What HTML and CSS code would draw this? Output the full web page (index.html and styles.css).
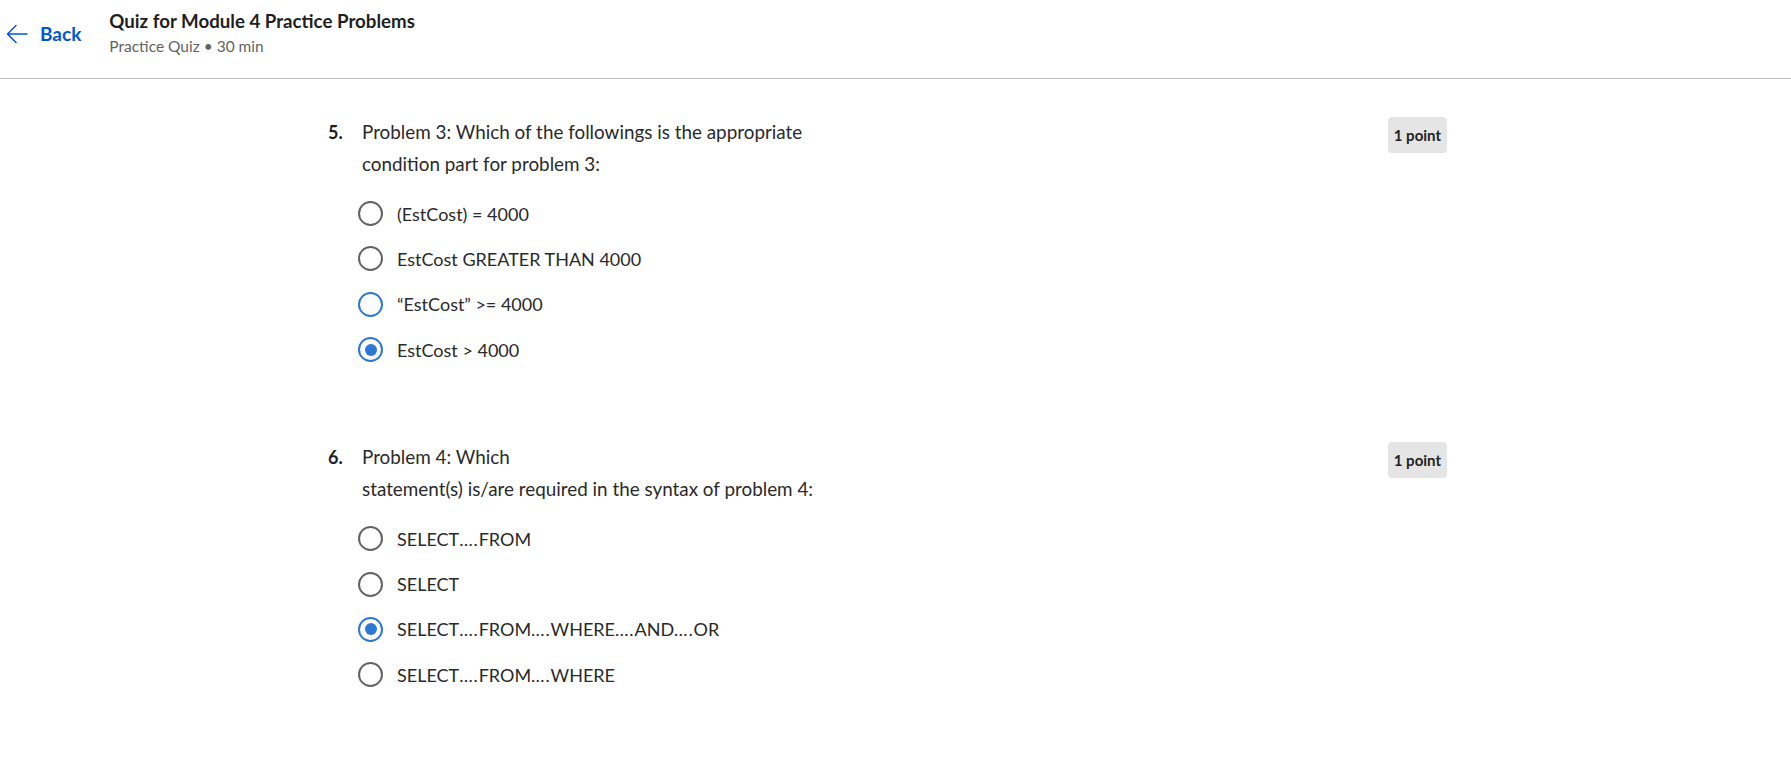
FILE: index.html
```html
<!DOCTYPE html>
<html lang="en">
<head>
<meta charset="utf-8">
<title>Quiz for Module 4 Practice Problems</title>
<link rel="stylesheet" href="styles.css">
</head>
<body>
<header class="topbar">
  <a class="back" href="#">
    <svg class="back-icon" width="22" height="20" viewBox="0 0 22 20" aria-hidden="true">
      <path d="M21 10 H2 M10 1.5 L1.5 10 L10 18.5" fill="none" stroke="#0056d2" stroke-width="1.5" stroke-linecap="round" stroke-linejoin="round"/>
    </svg>
    <span class="back-label">Back</span>
  </a>
  <div class="title-block">
    <div class="quiz-title">Quiz for Module 4 Practice Problems</div>
    <div class="quiz-meta">Practice Quiz • 30 min</div>
  </div>
</header>

<main class="content">
  <section class="question">
    <div class="qnum">5.</div>
    <div class="qbody">
      <div class="qtext">Problem 3: Which of the followings is the appropriate<br>condition part for problem 3:</div>
      <div class="options">
        <label class="option"><span class="radio"></span><span class="opt-text">(EstCost) = 4000</span></label>
        <label class="option"><span class="radio"></span><span class="opt-text">EstCost GREATER THAN 4000</span></label>
        <label class="option"><span class="radio focus"></span><span class="opt-text">“EstCost” &gt;= 4000</span></label>
        <label class="option"><span class="radio checked"></span><span class="opt-text">EstCost &gt; 4000</span></label>
      </div>
    </div>
    <div class="badge">1 point</div>
  </section>

  <section class="question q6">
    <div class="qnum">6.</div>
    <div class="qbody">
      <div class="qtext">Problem 4: Which<br>statement(s) is/are required in the syntax of problem 4:</div>
      <div class="options">
        <label class="option"><span class="radio"></span><span class="opt-text">SELECT<span class="ell">….</span>FROM</span></label>
        <label class="option"><span class="radio"></span><span class="opt-text">SELECT</span></label>
        <label class="option"><span class="radio checked"></span><span class="opt-text">SELECT<span class="ell">….</span>FROM<span class="ell">….</span>WHERE<span class="ell">….</span>AND<span class="ell">….</span>OR</span></label>
        <label class="option"><span class="radio"></span><span class="opt-text">SELECT<span class="ell">….</span>FROM<span class="ell">….</span>WHERE</span></label>
      </div>
    </div>
    <div class="badge">1 point</div>
  </section>
</main>
</body>
</html>
```
FILE: styles.css
```css
* { box-sizing: border-box; }

html, body {
  margin: 0;
  padding: 0;
  background: #ffffff;
}

body {
  font-family: "Lato", "Source Sans Pro", "Liberation Sans", sans-serif;
  color: #1f1f1f;
}

.topbar {
  height: 79px;
  border-bottom: 1px solid #bdbdbd;
  display: flex;
  align-items: flex-start;
}

.back {
  display: flex;
  align-items: center;
  gap: 12px;
  padding-left: 6px;
  margin-top: 24px;
  height: 20px;
  text-decoration: none;
  color: #0056d2;
}

.back-icon { display: block; }

.back-label {
  font-size: 19px;
  font-weight: 700;
  line-height: 20px;
}

.title-block {
  margin-left: 28px;
  padding-top: 9px;
}

.quiz-title {
  font-size: 18.7px;
  font-weight: 700;
  line-height: 24px;
  color: #1f1f1f;
}

.quiz-meta {
  font-size: 15.5px;
  line-height: 22px;
  color: #636363;
  margin-top: 2px;
}

.content {
  width: 1135px;
  margin: 0 auto;
  padding: 37px 16px 40px 0;
}

.question {
  display: flex;
  align-items: flex-start;
}

.q6 { margin-top: 69px; }

.qnum {
  width: 30px;
  flex: none;
  font-size: 18px;
  font-weight: 700;
  line-height: 32px;
  color: #1f1f1f;
}

.qbody { flex: 1; }

.qtext {
  padding-left: 4px;
  font-size: 18.85px;
  line-height: 32px;
  color: #2a2a2a;
  white-space: nowrap;
}

.options {
  margin-top: 11px;
  display: flex;
  flex-direction: column;
}

.option {
  height: 45.3px;
  display: flex;
  align-items: center;
  gap: 14px;
  cursor: pointer;
}

.radio {
  width: 25px;
  height: 25px;
  flex: none;
  border-radius: 50%;
  border: 2.5px solid #636363;
  display: flex;
  align-items: center;
  justify-content: center;
}

.radio.focus { border-color: #2d78d4; }

.radio.checked { border-color: #2d78d4; }

.radio.checked::after {
  content: "";
  width: 12px;
  height: 12px;
  border-radius: 50%;
  background: #2d78d4;
}

.opt-text {
  font-size: 18px;
  line-height: 24px;
  color: #2a2a2a;
}

.ell { letter-spacing: 0.85px; }

.badge {
  flex: none;
  margin-top: 1px;
  height: 36px;
  padding: 0 6px;
  display: flex;
  align-items: center;
  background: #e5e5e5;
  border-radius: 4px;
  font-size: 15px;
  font-weight: 700;
  color: #1f1f1f;
}
```
